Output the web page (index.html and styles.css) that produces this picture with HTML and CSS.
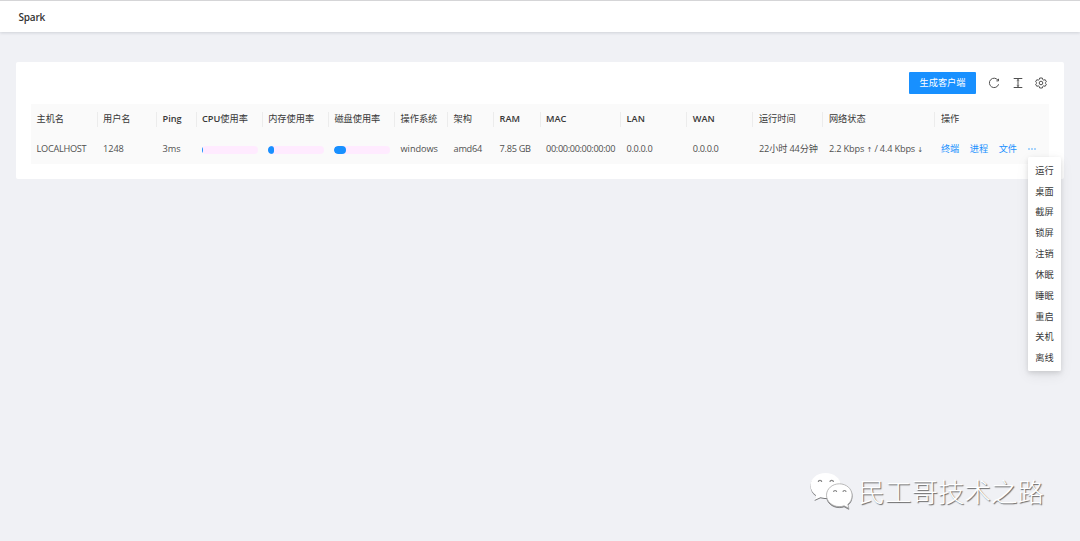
FILE: index.html
```html
<!DOCTYPE html>
<html lang="zh-CN">
<head>
<meta charset="utf-8">
<title>Spark</title>
<link rel="stylesheet" href="styles.css">
</head>
<body>
<header class="topbar">Spark</header>
<main class="card">
  <div class="toolbar">
    <button class="primary">生成客户端</button>
    <svg class="icon" viewBox="0 0 12 12"><path d="M10.1 3.4A4.7 4.7 0 1 0 10.6 7.3M10.5 1.800V3.900H8.400"/></svg>
    <svg class="icon" viewBox="0 0 12 12"><path d="M1.700 1.500H10.300M1.700 10.500H10.300M6 2.500V9.500M4.800 3.600L6 2.500L7.200 3.600M4.800 8.400L6 9.500L7.200 8.400"/></svg>
    <svg class="icon" viewBox="0 0 12 12"><path d="M4.700 1H7.300L7.700 2.500L8.700 3.100L10.200 2.700L11.400 4.800L10.400 5.700V6.300L11.400 7.200L10.200 9.300L8.700 8.900L7.700 9.500L7.300 11H4.700L4.300 9.500L3.300 8.900L1.800 9.300L.6 7.200L1.600 6.300V5.700L.6 4.800L1.800 2.700L3.300 3.100L4.300 2.500Z"/><circle cx="6" cy="6" r="1.800"/></svg>
  </div>
  <table class="grid">
    <colgroup>
      <col class="w-host"><col class="w-user"><col class="w-ping"><col class="w-bar"><col class="w-bar"><col class="w-bar"><col class="w-os"><col class="w-arch"><col class="w-ram"><col class="w-mac"><col class="w-bar"><col class="w-bar"><col class="w-time"><col class="w-net"><col>
    </colgroup>
    <thead>
      <tr><th>主机名</th><th>用户名</th><th><b>Ping</b></th><th><b>CPU</b>使用率</th><th>内存使用率</th><th>磁盘使用率</th><th>操作系统</th><th>架构</th><th><b>RAM</b></th><th><b>MAC</b></th><th><b>LAN</b></th><th><b>WAN</b></th><th>运行时间</th><th>网络状态</th><th>操作</th></tr>
    </thead>
    <tbody>
      <tr>
        <td class="host">LOCALHOST</td><td>1248</td><td>3ms</td>
        <td><div class="bar"><i style="width:1px"></i></div></td>
        <td><div class="bar"><i style="width:6px"></i></div></td>
        <td><div class="bar"><i style="width:12px"></i></div></td>
        <td>windows</td><td class="tight">amd64</td><td class="tight">7.85 GB</td><td class="addr">00:00:00:00:00:00</td><td class="addr">0.0.0.0</td><td class="addr">0.0.0.0</td><td class="time">22小时 44分钟</td>
        <td class="net">2.2 Kbps <span class="arrow">↑</span> / 4.4 Kbps <span class="arrow">↓</span></td>
        <td><div class="links"><a>终端</a><a>进程</a><a>文件</a><a class="more"><svg viewBox="0 0 8 2"><circle cx="1" cy="1" r=".7"/><circle cx="4" cy="1" r=".7"/><circle cx="7" cy="1" r=".7"/></svg></a></div></td>
      </tr>
    </tbody>
  </table>
</main>
<ul class="menu"><li>运行</li><li>桌面</li><li>截屏</li><li>锁屏</li><li>注销</li><li>休眠</li><li>睡眠</li><li>重启</li><li>关机</li><li>离线</li></ul>
<div class="watermark">
  <svg class="wechat" viewBox="0 0 44 38">
    <path d="M15.500 1C7 1 .5 6.500 .5 13.500C.5 17.500 2.500 20.800 6 23.200L4.500 28L10.500 25.200C12 25.700 14 26 16 26C24 26 31 20.500 31 13.500S24 1 15.500 1Z"/>
    <path class="front" d="M29.300 11.800C22.200 11.800 16.500 16.900 16.500 23.200S22.200 34.600 29.300 34.600C31 34.600 32.600 34.400 34.100 33.800L38.800 36.300L37.800 32.300C40.600 30.200 42.100 26.900 42.100 23.200C42.100 16.900 36.400 11.800 29.300 11.800Z"/>
    <path class="eyes" d="M8.300 10a1.700 1.700 0 1 1 3.400 0M20 10a1.700 1.700 0 1 1 3.400 0M23.600 20a1.500 1.500 0 1 1 3 0M33 20a1.500 1.500 0 1 1 3 0"/>
  </svg>
  <span class="brand">民工哥技术之路</span>
</div>
</body>
</html>
```
FILE: styles.css
```css
* { box-sizing: border-box; }
body {
  margin: 0;
  height: 541px;
  overflow: hidden;
  background: #f0f1f5;
  color: #505050;
  font: 9.2px/14px "Open Sans", "Noto Sans CJK SC", sans-serif;
}
.topbar {
  height: 32px;
  padding: 1px 18.500px 0;
  border-top: 1px solid #d5d5d7;
  background: #fff;
  box-shadow: 0 1px 3px rgba(0, 21, 41, .14);
  color: #333;
  font-size: 10px;
  font-weight: 600;
  line-height: 30px;
  letter-spacing: -.2px;
}
.card {
  height: 117px;
  margin: 30px 16px 0;
  padding: 10px 15px 0;
  border-radius: 2px;
  background: #fff;
}
.toolbar {
  display: flex;
  align-items: center;
  justify-content: flex-end;
  height: 22px;
  padding-right: 2px;
}
.primary {
  width: 67px;
  height: 22px;
  margin-right: .5px;
  padding: 0;
  border: 0;
  border-radius: 1px;
  background: #1890ff;
  color: #fff;
  font: inherit;
}
.icon {
  width: 12px;
  height: 12px;
  margin-left: 11.500px;
  fill: none;
  stroke: #505050;
  stroke-width: 1;
}
.grid {
  width: 1018px;
  margin-top: 10px;
  border-collapse: collapse;
  table-layout: fixed;
  background: #fafafa;
}
.w-host { width: 66.500px; }
.w-user { width: 59.500px; }
.w-ping { width: 39.500px; }
.w-bar { width: 66.200px; }
.w-os { width: 53px; }
.w-arch { width: 46px; }
.w-ram { width: 46.500px; }
.w-mac { width: 80.500px; }
.w-time { width: 70px; }
.w-net { width: 112px; }
th, td {
  height: 30px;
  padding: 0 0 0 5.500px;
  text-align: left;
  white-space: nowrap;
}
td { letter-spacing: -.06px; }
th {
  color: #383838;
  font-weight: 400;
  background: linear-gradient(#ececec, #ececec) right center / 1px 15px no-repeat;
}
th b { font-weight: 600; }
th:last-child { background: none; }
.host { letter-spacing: -.28px; }
.addr { letter-spacing: -.36px; }
.tight { letter-spacing: -.28px; }
.time { letter-spacing: -.15px; }
.net { letter-spacing: -.16px; }
.arrow { font: 7px/1 "DejaVu Sans", sans-serif; }
.bar {
  width: 56px;
  height: 8px;
  margin-top: 1px;
  overflow: hidden;
  border-radius: 4px;
  background: #ffebff;
}
.bar i {
  display: block;
  height: 8px;
  border-radius: 4px;
  background: #1890ff;
}
.links { display: flex; align-items: center; gap: 10.500px; color: #1890ff; letter-spacing: 0; }
.more svg { display: block; width: 8px; height: 2px; fill: #1890ff; }
.menu {
  position: absolute;
  top: 157px;
  left: 1028px;
  width: 33px;
  height: 214px;
  margin: 0;
  padding: 3.700px 0 0;
  border-radius: 1.500px;
  background: #fff;
  box-shadow: 0 2px 5px rgba(0, 0, 0, .12), 0 4px 14px rgba(0, 0, 0, .07);
  color: #383838;
  list-style: none;
  line-height: 20.850px;
  text-align: center;
}
.watermark {
  position: absolute;
  top: 472px;
  left: 810px;
  display: flex;
  align-items: center;
}
.wechat {
  width: 44px;
  height: 38px;
  fill: #fff;
  filter: drop-shadow(.5px 1px .5px rgba(0, 0, 0, .5));
}
.front { stroke: #aaa; stroke-width: .8; }
.eyes { fill: none; stroke: #888; stroke-width: 1.200; }
.brand {
  margin-left: 4.500px;
  color: #fff;
  font: 300 26.500px/38px "Noto Sans CJK SC", sans-serif;
  text-shadow: 1px 1px 1px #666;
}
```
